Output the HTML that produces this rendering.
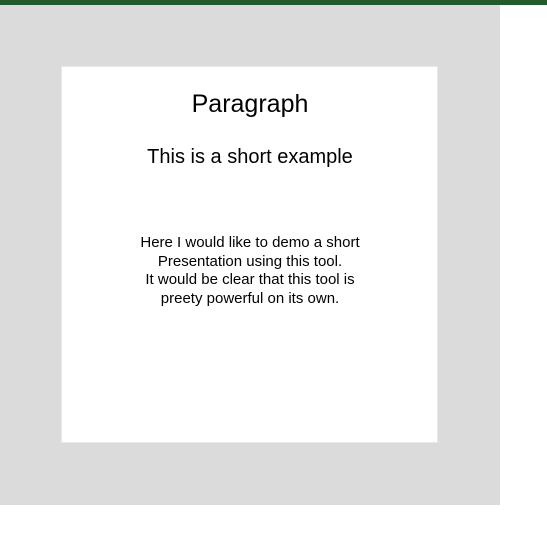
<!DOCTYPE html>
<html><head><meta charset="utf-8"><style>
html,body{margin:0;padding:0;width:547px;height:533px;background:#fff;overflow:hidden;font-family:"Liberation Sans",sans-serif;}
.bar{position:absolute;left:0;top:0;width:547px;height:5px;background:#255b2c;}
.stage{position:absolute;left:0;top:5px;width:500px;height:500px;background:#dbdbdb;}
.card{position:absolute;left:62px;top:67px;width:375px;height:375px;background:#fff;box-shadow:0 0 0 1px #e8e8e8;text-align:center;color:#000;}
h1,h2,p{padding-left:1px;}
h1{position:absolute;left:0;right:0;top:23px;margin:0;font-size:25px;font-weight:normal;}
h2{position:absolute;left:0;right:0;top:79px;margin:0;font-size:20px;font-weight:normal;}
p{position:absolute;left:0;right:0;top:167px;margin:0;font-size:15px;line-height:18.7px;}
</style></head><body>
<div class="bar"></div>
<div class="stage"></div>
<div class="card">
<h1>Paragraph</h1>
<h2>This is a short example</h2>
<p>Here I would like to demo a short<br>Presentation using this tool.<br>It would be clear that this tool is<br>preety powerful on its own.</p>
</div>
</body></html>
